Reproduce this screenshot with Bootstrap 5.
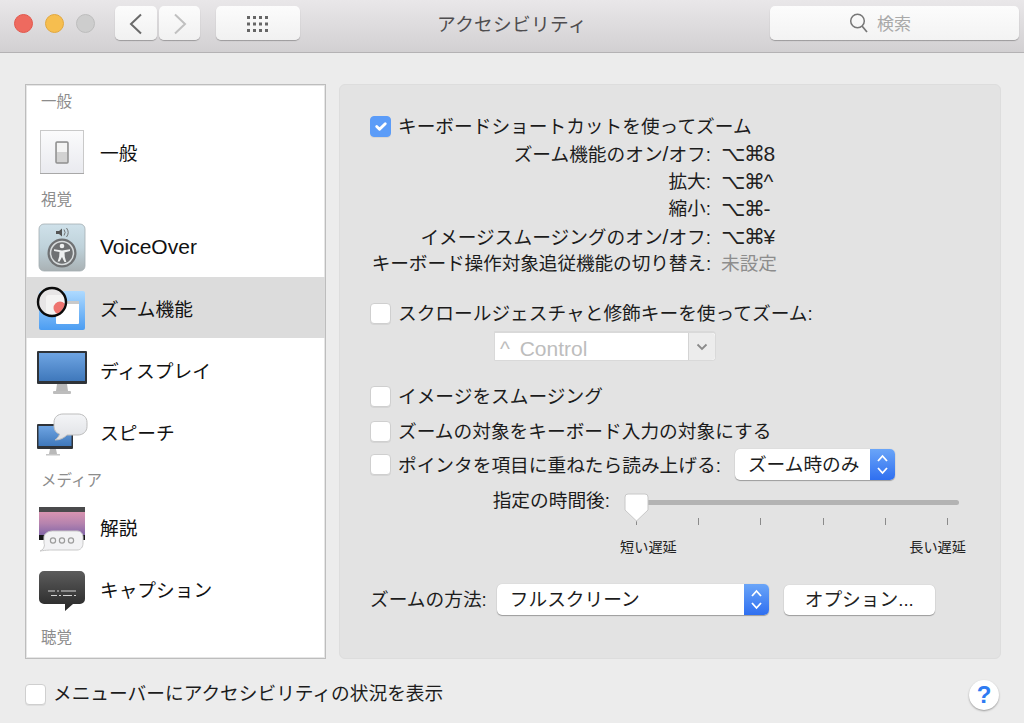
<!DOCTYPE html>
<html lang="ja">
<head>
  <meta charset="UTF-8">
  <title>アクセシビリティ</title>
  <link href="https://cdn.jsdelivr.net/npm/bootstrap@5.3.3/dist/css/bootstrap.min.css" rel="stylesheet">
  <style>
    html, body { height: 723px; overflow: hidden; }
    body { background: #ececec; color: #1c1c1c; font-family: "Liberation Sans", "Noto Sans CJK JP", "DejaVu Sans", sans-serif; font-size: 18.7px; line-height: 28px; }
    .lat { font-size: 21px; }

    /* toolbar */
    .toolbar { height: 53px; padding: 6px 5px 0 14px; background: linear-gradient(#e9e7e9, #d2d0d2); border-bottom: 1px solid #b4b2b4; }
    .light { width: 19px; height: 19px; border-radius: 50%; margin-top: 8px; }
    .light-red { background: #ee6a5f; border: 1px solid #e2574c; margin-right: 12px; }
    .light-yellow { background: #f6be4f; border: 1px solid #e2a83e; margin-right: 12px; }
    .light-grey { background: #cdcdcd; border: 1px solid #bdbdbd; margin-right: 20px; }
    .tool-btn { height: 34px; padding: 0; border: 0; border-radius: 5px; background: linear-gradient(#fcfcfc, #f1f1f1); box-shadow: 0 1px 1px rgba(0,0,0,.28); }
    .tool-btn:hover { background: linear-gradient(#fcfcfc, #f1f1f1); }
    .tool-back { width: 42px; margin-right: 2px; }
    .tool-next { width: 41px; margin-right: 16px; }
    .tool-grid { width: 84px; }
    .title { padding-right: 46px; height: 38px; line-height: 38px; color: #4f4d4f; letter-spacing: .3px; }
    .search { width: 249px; height: 34px; border-radius: 5px; background: linear-gradient(#fcfcfc, #f3f3f3); box-shadow: 0 1px 1px rgba(0,0,0,.28); color: #a9a9a9; font-size: 17px; padding-left: 79px; gap: 8px; }
    .search span { padding-top: 3px; }

    /* sidebar */
    .content { padding: 31px 23px 0 25px; gap: 13px; }
    .sidebar { width: 301px; height: 575px; flex: none; background: #fff; border: 1px solid #bdbdbd; box-shadow: inset 0 0 0 1px #e6e6e6; overflow: hidden; }
    .sidebar .list-group-item { background: transparent; border: 0; padding: 0 0 0 10px; color: #111; gap: 12px; height: 62px; }
    .sidebar .list-group-item span { padding-top: 2px; }
    .sidebar .list-group-item span.lat { padding-top: 0; }
    .sidebar .list-group-item.active { background: #dcdcdc; color: #111; height: 61px; margin-bottom: 2px; }
    .sidebar .list-group-item.active span { padding-top: 5px; }
    .side-head { font-size: 15.5px; color: #8c8c8c; padding-left: 15px; height: 33px; line-height: 33px; }
    .side-first { height: 37px; line-height: 33px; }
    .side-see { height: 32px; line-height: 31px; }
    .side-icon { width: 52px; height: 52px; flex: none; }

    /* panel */
    .panel { flex: 1; height: 575px; background: #e3e3e3; border: 1px solid #dddddd; border-radius: 6px; padding: 27px 0 0 30px; }
    .form-check-input.mac-check { width: 21px; height: 21px; margin: 0; flex: none; border: 1px solid #cfcfcf; border-radius: 4px; background-color: #fff; box-shadow: 0 1px 0 rgba(0,0,0,.06); }
    .form-check-input.mac-check:checked { background-color: #5b9cf8; border-color: #5b9cf8; }
    .check-row { gap: 7px; height: 28px; }
    .panel .check-row span, .hover-row > span { padding-top: 2px; }
    .shortcuts { display: grid; grid-template-columns: 345px auto; column-gap: 10px; grid-auto-rows: 27.5px; line-height: 27.5px; margin-left: -4px; }
    .shortcuts .name { text-align: right; white-space: nowrap; }
    .shortcuts .tight { letter-spacing: -.12px; }
    .keys { color: #222; font-family: "Liberation Sans", "DejaVu Sans", "Noto Sans CJK JP", sans-serif; font-size: 21px; letter-spacing: -1.3px; }
    .unset { color: #8d8d8d; }
    .mt-scroll { margin-top: 21.5px; }
    .mod-popup { width: 222px; height: 30px; margin: 4px 0 0 124px; background: #fff; border: 1px solid #d9d9d9; border-top-width: 2px; border-radius: 1px 4px 4px 1px; color: #bdbdbd; padding-left: 5px; font-size: 21px; word-spacing: 4px; }
    .mod-popup > span:first-child { padding-top: 4px; }
    .mod-popup .caret { width: 27px; height: 100%; margin-left: auto; background: #ececec; border-left: 1px solid #d4d4d4; border-radius: 0 4px 4px 0; }
    .mt-smooth { margin-top: 21px; }
    .mt-focus { margin-top: 7px; }
    .popup { height: 31px; background: #fff; border-radius: 5px; box-shadow: 0 1px 1px rgba(0,0,0,.3), 0 0 1px rgba(0,0,0,.2); padding-left: 13px; overflow: hidden; }
    .popup .stepper { width: 25px; height: 100%; margin-left: auto; background: linear-gradient(#6aa5f8, #2f6ff0); }
    .popup-when { width: 160px; }
    .popup-how { width: 272px; }
    .hover-row { gap: 7px; height: 31px; margin-top: 4px; }
    .hover-row .popup { margin-left: 7px; }
    .delay { margin-top: 13px; }
    .delay-label { width: 240px; text-align: right; line-height: 16px; margin-right: 15px; }
    .slider { width: 334px; position: relative; }
    .track { height: 5px; margin-top: 7px; background: #b3b3b3; border-radius: 3px; }
    .ticks { margin-top: 13px; height: 7px; padding: 0 11px; }
    .ticks span { width: 1px; height: 7px; background: #8a8a8a; }
    .thumb { position: absolute; left: -1px; top: 0; }
    .ends { font-size: 14.2px; line-height: 16px; margin: 14px -7px 0 -5px; color: #222; }
    .how-row { height: 31px; margin-top: 29px; gap: 10px; }
    .how-btn { width: 151px; height: 30px; margin-left: 5px; padding: 0; border: 0; border-radius: 5px; background: #fff; color: #222; font-size: 18.7px; line-height: 30px; box-shadow: 0 1px 1px rgba(0,0,0,.3), 0 0 1px rgba(0,0,0,.2); }

    /* footer */
    .foot { padding: 21px 25px 0 25px; }
    .foot .check-row { margin-top: -2px; }
    .help { width: 30px; height: 30px; padding: 0; border: 0; border-radius: 50%; background: #fff; color: #2f7bf2; font-size: 24px; font-weight: 700; line-height: 30px; box-shadow: 0 1px 2px rgba(0,0,0,.35); }
  </style>
</head>

<body>
  <!-- title bar -->
  <div class="toolbar d-flex align-items-start">
    <div class="light light-red"></div>
    <div class="light light-yellow"></div>
    <div class="light light-grey"></div>
    <button class="btn tool-btn tool-back" aria-label="戻る">
      <svg width="14" height="22" viewBox="0 0 14 22"><path d="M12 1.5 2 11l10 9.5" fill="none" stroke="#6a6a6a" stroke-width="2"/></svg>
    </button>
    <button class="btn tool-btn tool-next" aria-label="進む">
      <svg width="14" height="22" viewBox="0 0 14 22"><path d="M2 1.5 12 11 2 20.5" fill="none" stroke="#c0c0c0" stroke-width="2"/></svg>
    </button>
    <button class="btn tool-btn tool-grid" aria-label="すべて表示">
      <svg width="24" height="18" viewBox="0 0 24 18" fill="#666">
        <path d="M1 1h3v3H1zM7 1h3v3H7zM13 1h3v3h-3zM19 1h3v3h-3zM1 7.500h3v3H1zM7 7.500h3v3H7zM13 7.500h3v3h-3zM19 7.500h3v3h-3zM1 14h3v3H1zM7 14h3v3H7zM13 14h3v3h-3zM19 14h3v3h-3z"/>
      </svg>
    </button>
    <div class="title flex-fill text-center">アクセシビリティ</div>
    <div class="search d-flex align-items-center">
      <svg width="20" height="20" viewBox="0 0 20 20"><circle cx="8.500" cy="8" r="6.800" fill="none" stroke="#777" stroke-width="1.500"/><path d="m13 13 5 6" stroke="#777" stroke-width="1.700"/></svg>
      <span>検索</span>
    </div>
  </div>

  <div class="content d-flex">
    <!-- sidebar -->
    <div class="sidebar">
      <div class="side-head side-first">一般</div>
      <div class="list-group list-group-flush">
        <a class="list-group-item d-flex align-items-center">
          <svg class="side-icon" viewBox="0 0 52 52">
            <defs><linearGradient id="plate" x1="0" y1="0" x2="0" y2="1"><stop offset="0" stop-color="#fbfbfc"/><stop offset="1" stop-color="#e9eaef"/></linearGradient></defs>
            <rect x="4.500" y="3.500" width="43" height="43" fill="url(#plate)" stroke="#c9c9c9"/>
            <path d="M4 46.500h44" stroke="#a8a8a8"/>
            <rect x="20" y="15" width="12" height="21" rx="1" fill="#d2d2d2" stroke="#8f8f8f" stroke-width="1.500"/>
            <rect x="21" y="16" width="10" height="9" fill="#f4f4f4"/>
          </svg>
          <span>一般</span>
        </a>
      </div>
      <div class="side-head side-see">視覚</div>
      <div class="list-group list-group-flush">
        <a class="list-group-item d-flex align-items-center">
          <svg class="side-icon" viewBox="0 0 52 52">
            <defs><linearGradient id="vo" x1="0" y1="0" x2="0" y2="1"><stop offset="0" stop-color="#cfe1ea"/><stop offset=".5" stop-color="#bfd2da"/><stop offset="1" stop-color="#a9b1b4"/></linearGradient></defs>
            <rect x="3" y="3" width="46" height="47" rx="5" fill="url(#vo)" stroke="#a3adb1" stroke-width=".8"/>
            <path d="M20 10h3l3-2.500v8L23 13h-3z" fill="#555"/>
            <path d="M28 8.500a5 5 0 0 1 0 6M30.500 7a7.500 7.500 0 0 1 0 9" fill="none" stroke="#666" stroke-width=".9"/>
            <circle cx="26" cy="32" r="14.500" fill="#6f7173"/>
            <circle cx="26" cy="32" r="11.500" fill="none" stroke="#d8dcdd" stroke-width="1.500"/>
            <circle cx="26" cy="25" r="2.300" fill="#eef0f0"/>
            <path d="M18 28.200 26 29.500l8-1.300v1.800l-5.500 1.500.3 4.500 1.500 5h-1.900L26 36l-2.400 4.500h-1.900l1.500-5 .3-4.500L18 30z" fill="#eef0f0"/>
          </svg>
          <span class="lat">VoiceOver</span>
        </a>
        <a class="list-group-item active d-flex align-items-center">
          <svg class="side-icon" viewBox="0 0 52 52">
            <defs>
              <linearGradient id="folder" x1="0" y1="0" x2="0" y2="1"><stop offset="0" stop-color="#aedaff"/><stop offset="1" stop-color="#4c9df2"/></linearGradient>
              <clipPath id="lens"><circle cx="16" cy="20" r="13"/></clipPath>
            </defs>
            <rect x="3" y="9" width="46" height="39" rx="2" fill="url(#folder)"/>
            <rect x="20" y="19" width="23" height="23" rx="1" fill="#fff"/>
            <rect x="20" y="19" width="23" height="3" fill="#c9c9c9"/>
            <circle cx="16" cy="20" r="14" fill="#e7e5e6"/>
            <g clip-path="url(#lens)">
              <rect x="10" y="13" width="22" height="24" rx="3" fill="#f4f3f3"/>
              <circle cx="24" cy="26" r="6.500" fill="#ee7470"/>
            </g>
            <circle cx="16" cy="20" r="14" fill="none" stroke="#0b0b0b" stroke-width="2.400"/>
          </svg>
          <span>ズーム機能</span>
        </a>
        <a class="list-group-item d-flex align-items-center">
          <svg class="side-icon" viewBox="0 0 52 52">
            <defs><linearGradient id="screen" x1="0" y1="0" x2="0" y2="1"><stop offset="0" stop-color="#6ea4e2"/><stop offset="1" stop-color="#3f78bb"/></linearGradient></defs>
            <path d="M21 39h10l1 7H20z" fill="#b9b9b9"/>
            <rect x="17" y="46" width="18" height="3" rx="1" fill="#bdbdbd"/>
            <rect x="1" y="6" width="50" height="33" rx="1" fill="#2f3338"/>
            <rect x="3" y="8" width="46" height="28" fill="url(#screen)"/>
          </svg>
          <span>ディスプレイ</span>
        </a>
        <a class="list-group-item d-flex align-items-center">
          <svg class="side-icon" viewBox="0 0 52 52">
            <defs><linearGradient id="bubble" x1="0" y1="0" x2="0" y2="1"><stop offset="0" stop-color="#f4f5f7"/><stop offset="1" stop-color="#dfe1e5"/></linearGradient></defs>
            <path d="M14 42h6l1 5h-8z" fill="#b9b9b9"/>
            <rect x="10" y="47" width="14" height="1.500" fill="#c6c6c6"/>
            <rect x="1" y="17" width="36" height="25" rx="1" fill="#2f3338"/>
            <rect x="2.500" y="19" width="33" height="20" fill="url(#screen)"/>
            <path d="M27 7h15c5 0 9 3 9 8.500v4c0 5-4 8.500-9 8.500H31c-3 3-7 5-12 5 2.500-2 4-4 4.500-6C20 26 18 23 18 19.500v-4C18 10 22 7 27 7z" fill="url(#bubble)" stroke="#bdbdbd"/>
          </svg>
          <span>スピーチ</span>
        </a>
      </div>
      <div class="side-head">メディア</div>
      <div class="list-group list-group-flush">
        <a class="list-group-item d-flex align-items-center">
          <svg class="side-icon" viewBox="0 0 52 52">
            <defs><linearGradient id="film" x1="0" y1="0" x2="0" y2="1"><stop offset="0" stop-color="#e89bb2"/><stop offset=".5" stop-color="#b583ae"/><stop offset="1" stop-color="#6d5aa5"/></linearGradient></defs>
            <rect x="3" y="5" width="46" height="33" fill="url(#film)"/>
            <rect x="3" y="5" width="46" height="5" fill="#4a4a4c"/>
            <rect x="3" y="33" width="46" height="5" fill="#17171a"/>
            <path d="M17 29h24c4 0 6 3 6 6v6c0 4-2 7-6 7H17c-3 0-6 0-13 1 3-1 4-3 4.500-6-.3-1-.5-2-.5-2v-6c0-3 4-6 8.500-6z" fill="#f2f2f4" stroke="#c9c9c9"/>
            <g fill="none" stroke="#9c9c9c" stroke-width="1.200"><circle cx="17" cy="38.500" r="2.600"/><circle cx="26" cy="38.500" r="2.600"/><circle cx="35" cy="38.500" r="2.600"/></g>
          </svg>
          <span>解説</span>
        </a>
        <a class="list-group-item d-flex align-items-center">
          <svg class="side-icon" viewBox="0 0 52 52">
            <defs><linearGradient id="cap" x1="0" y1="0" x2="0" y2="1"><stop offset="0" stop-color="#5c5c5c"/><stop offset="1" stop-color="#262626"/></linearGradient></defs>
            <path d="M8 7h36a5 5 0 0 1 5 5v23a5 5 0 0 1-5 5h-7l-8 7v-7H8a5 5 0 0 1-5-5V12a5 5 0 0 1 5-5z" fill="url(#cap)"/>
            <path d="M12 27h7M21 27h2M25 27h15M15 31.500h6M23 31.500h2M27 31.500h9M38 31.500h2" stroke="#d4d4d4" stroke-width="1.200"/>
          </svg>
          <span>キャプション</span>
        </a>
      </div>
      <div class="side-head">聴覚</div>
    </div>

    <!-- zoom settings -->
    <div class="panel">
      <label class="check-row d-flex align-items-center">
        <input class="form-check-input mac-check" type="checkbox" checked>
        <span>キーボードショートカットを使ってズーム</span>
      </label>
      <div class="shortcuts">
        <span class="name">ズーム機能のオン<span class="lat">/</span>オフ:</span><span class="keys">⌥⌘8</span>
        <span class="name">拡大:</span><span class="keys">⌥⌘^</span>
        <span class="name">縮小:</span><span class="keys">⌥⌘-</span>
        <span class="name">イメージスムージングのオン<span class="lat">/</span>オフ:</span><span class="keys">⌥⌘¥</span>
        <span class="name tight">キーボード操作対象追従機能の切り替え:</span><span class="unset">未設定</span>
      </div>

      <label class="check-row d-flex align-items-center mt-scroll">
        <input class="form-check-input mac-check" type="checkbox">
        <span>スクロールジェスチャと修飾キーを使ってズーム:</span>
      </label>
      <div class="mod-popup d-flex align-items-center">
        <span>^ Control</span>
        <span class="caret d-flex align-items-center justify-content-center">
          <svg width="12" height="8" viewBox="0 0 12 8"><path d="m1.500 1.500 4.500 4.500 4.500-4.500" fill="none" stroke="#8a8a8a" stroke-width="1.800"/></svg>
        </span>
      </div>

      <label class="check-row d-flex align-items-center mt-smooth">
        <input class="form-check-input mac-check" type="checkbox">
        <span>イメージをスムージング</span>
      </label>
      <label class="check-row d-flex align-items-center mt-focus">
        <input class="form-check-input mac-check" type="checkbox">
        <span>ズームの対象をキーボード入力の対象にする</span>
      </label>
      <div class="hover-row d-flex align-items-center">
        <input class="form-check-input mac-check" type="checkbox">
        <span>ポインタを項目に重ねたら読み上げる:</span>
        <div class="popup popup-when d-flex align-items-center">
          <span>ズーム時のみ</span>
          <span class="stepper d-flex align-items-center justify-content-center">
            <svg width="13" height="23" viewBox="0 0 13 23"><path d="m2 8 4.500-5L11 8M2 15l4.500 5 4.500-5" fill="none" stroke="#fff" stroke-width="1.800"/></svg>
          </span>
        </div>
      </div>

      <div class="delay d-flex align-items-start">
        <div class="delay-label">指定の時間後:</div>
        <div class="slider">
          <div class="track"></div>
          <div class="ticks d-flex justify-content-between">
            <span></span><span></span><span></span><span></span><span></span><span></span>
          </div>
          <svg class="thumb" width="25" height="29" viewBox="0 0 25 29"><path d="M4 1h17a3 3 0 0 1 3 3v13L12.500 28 1 17V4a3 3 0 0 1 3-3z" fill="#fff" stroke="#c8c8c8"/></svg>
          <div class="ends d-flex justify-content-between"><span>短い遅延</span><span>長い遅延</span></div>
        </div>
      </div>

      <div class="how-row d-flex align-items-center">
        <span>ズームの方法:</span>
        <div class="popup popup-how d-flex align-items-center">
          <span>フルスクリーン</span>
          <span class="stepper d-flex align-items-center justify-content-center">
            <svg width="13" height="23" viewBox="0 0 13 23"><path d="m2 8 4.500-5L11 8M2 15l4.500 5 4.500-5" fill="none" stroke="#fff" stroke-width="1.800"/></svg>
          </span>
        </div>
        <button class="btn how-btn">オプション...</button>
      </div>
    </div>
  </div>

  <!-- footer -->
  <div class="foot d-flex align-items-center justify-content-between">
    <label class="check-row d-flex align-items-center">
      <input class="form-check-input mac-check" type="checkbox">
      <span>メニューバーにアクセシビリティの状況を表示</span>
    </label>
    <button class="btn help">?</button>
  </div>

  <script src="https://cdn.jsdelivr.net/npm/bootstrap@5.3.3/dist/js/bootstrap.bundle.min.js"></script>
</body>
</html>
